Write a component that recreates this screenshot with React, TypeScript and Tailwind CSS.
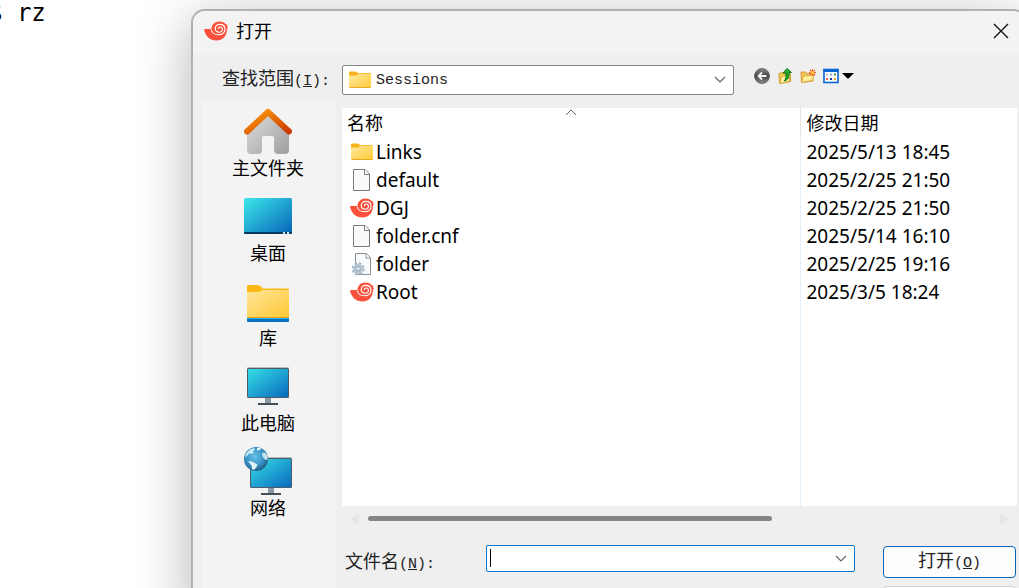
import { useState } from 'react'
import type { ReactNode } from 'react'

interface FileEntry {
  name: string
  kind: 'directory' | 'file' | 'session' | 'config'
  modified: string
}

interface Place {
  label: string
  icon: ReactNode
}

const files: FileEntry[] = [
  { name: 'Links', kind: 'directory', modified: '2025/5/13 18:45' },
  { name: 'default', kind: 'file', modified: '2025/2/25 21:50' },
  { name: 'DGJ', kind: 'session', modified: '2025/2/25 21:50' },
  { name: 'folder.cnf', kind: 'file', modified: '2025/5/14 16:10' },
  { name: 'folder', kind: 'config', modified: '2025/2/25 19:16' },
  { name: 'Root', kind: 'session', modified: '2025/3/5 18:24' },
]

const places: Place[] = [
  { label: '主文件夹', icon: <HomeIcon /> },
  { label: '桌面', icon: <DesktopIcon /> },
  { label: '库', icon: <LibraryIcon /> },
  { label: '此电脑', icon: <ComputerIcon /> },
  { label: '网络', icon: <NetworkIcon /> },
]

function ShellIcon() {
  return (
    <svg viewBox="0 0 24 20" className="h-5 w-6 shrink-0">
      <path
        d="M0 8H7.500C7.500 3.800 10.800 0.500 15.500 0.500C18.500 0.500 20.500 1.500 21.500 3L23.500 4L23 5.500L24 6.500L23 8C23 15 18.500 19.500 12.500 19.500C6 19.500 1 15 0 8Z"
        fill="#fb503b"
      />
      <path
        d="M7.200 8.500C8 12 10.800 13.800 14.500 13.800C18.800 13.800 21 11 21 8.200C21 5 18.500 3.400 15.800 3.400C12.800 3.400 11.200 5.500 11.200 7.600C11.200 9.900 13.200 11.200 15.200 11.200C17.300 11.200 18.400 9.700 18.400 8.300C18.400 6.800 17.300 6 16.200 6C15 6 14.200 6.900 14.400 8.100"
        fill="none"
        stroke="#fff"
        strokeWidth="1.100"
      />
    </svg>
  )
}

function FolderIcon() {
  return (
    <svg viewBox="0 0 22 18" className="h-[18px] w-[22px] shrink-0">
      <defs>
        <linearGradient id="folder" x1="0" y1="0" x2="1" y2="1">
          <stop offset="0" stopColor="#ffe8a0" />
          <stop offset="1" stopColor="#ffca36" />
        </linearGradient>
      </defs>
      <path d="M0 1.500Q0 0.500 1 0.500H7L9 2H21Q22 2 22 3V9H0Z" fill="#f9b31c" />
      <path d="M0 4.500H7.500L9.500 2.800H22V16Q22 17 21 17H1Q0 17 0 16Z" fill="url(#folder)" />
      <path d="M0.500 16.500H21.500" stroke="#e9a820" />
    </svg>
  )
}

function PageIcon() {
  return (
    <svg viewBox="0 0 18 22" className="h-[22px] w-[18px] shrink-0">
      <path d="M0.500 0.500H12L16.500 5V21.500H0.500Z" fill="#fafafa" stroke="#777" />
      <path d="M11.500 0.500V5.500H16" fill="#fff" stroke="#777" />
    </svg>
  )
}

function ConfigIcon() {
  return (
    <svg viewBox="0 0 20 23" className="h-[23px] w-5 shrink-0">
      <path d="M3.500 0.500H14.500L18.500 4.500V21.500H3.500Z" fill="#f8fafb" stroke="#8b9094" />
      <path d="M14 0.500V5H18.500" fill="#fff" stroke="#8b9094" />
      <circle cx="6.200" cy="15.800" r="5.600" fill="none" stroke="#a3b5c4" strokeWidth="2" strokeDasharray="2.400 2" />
      <circle cx="6.200" cy="15.800" r="3.600" fill="none" stroke="#b5c6d4" strokeWidth="3" />
      <circle cx="6.200" cy="15.800" r="2" fill="#e9eef2" stroke="#7e93a5" strokeWidth="0.800" />
    </svg>
  )
}

function HomeIcon() {
  return (
    <svg viewBox="0 -1 48 48" className="size-12">
      <defs>
        <linearGradient id="wall" x1="0" y1="0" x2="1" y2="1">
          <stop offset="0" stopColor="#e0e0e0" />
          <stop offset="1" stopColor="#9e9e9e" />
        </linearGradient>
        <linearGradient id="roof" x1="0" y1="0" x2="1" y2="1">
          <stop offset="0" stopColor="#ff9d0a" />
          <stop offset="1" stopColor="#cc3a00" />
        </linearGradient>
      </defs>
      <path
        d="M3 22L24 3L45 22V42Q45 46 41 46H34Q30 46 30 42V30Q30 28 28 28H20Q18 28 18 30V42Q18 46 14 46H7Q3 46 3 42Z"
        fill="url(#wall)"
      />
      <path d="M3 23.500L24 4L45 23.500" fill="none" stroke="url(#roof)" strokeWidth="6" strokeLinecap="round" strokeLinejoin="round" />
    </svg>
  )
}

function DesktopIcon() {
  return (
    <svg viewBox="0 0 48 48" className="size-12">
      <defs>
        <linearGradient id="screen" x1="0" y1="0" x2="1" y2="1">
          <stop offset="0" stopColor="#3ce8ea" />
          <stop offset="1" stopColor="#0663b8" />
        </linearGradient>
      </defs>
      <rect y="6" width="48" height="36" rx="1.500" fill="url(#screen)" />
      <path d="M0 40H48V40.500Q48 42 46.500 42H1.500Q0 42 0 40.500Z" fill="#073a63" />
      <path d="M39 41H41M43 41H45" stroke="#dcecf5" strokeWidth="2" />
    </svg>
  )
}

function LibraryIcon() {
  return (
    <svg viewBox="0 -2 48 48" className="size-12">
      <defs>
        <linearGradient id="library" x1="0" y1="0" x2="1" y2="1">
          <stop offset="0" stopColor="#ffe59b" />
          <stop offset="1" stopColor="#ffc832" />
        </linearGradient>
      </defs>
      <path d="M3 7Q3 6 4.500 6H14Q16 6 19 9.500H44Q45 10 45 11V18H3Z" fill="#fbb917" />
      <path d="M3 13H14Q16 13 18.500 11H45V38Q45 39 44 39H4Q3 39 3 38Z" fill="url(#library)" />
      <path d="M3 38.500H45" stroke="#e1a322" />
      <path d="M3 39.500H45" stroke="#27b4e5" />
      <path d="M3 40H45V42Q45 43 44 43H4Q3 43 3 42Z" fill="#0870c2" />
    </svg>
  )
}

function Monitor() {
  return (
    <>
      <defs>
        <linearGradient id="monitor" x1="0" y1="0" x2="1" y2="1">
          <stop offset="0" stopColor="#36e1e7" />
          <stop offset="1" stopColor="#0867bd" />
        </linearGradient>
      </defs>
      <rect x="21" y="31" width="6" height="6" fill="#8b98a3" />
      <rect x="14" y="36" width="20" height="2" fill="#454f58" />
      <rect x="3.500" y="1.500" width="41" height="29" rx="0.500" fill="url(#monitor)" stroke="#4d5c66" />
      <path d="M3.500 0.500H44.500" stroke="#b4bdc5" />
    </>
  )
}

function ComputerIcon() {
  return (
    <svg viewBox="0 -5 48 48" className="size-12">
      <Monitor />
    </svg>
  )
}

function NetworkIcon() {
  return (
    <svg viewBox="0 0 48 48" className="size-12">
      <defs>
        <radialGradient id="globe" cx="0.450" cy="0.400" r="0.600">
          <stop offset="0" stopColor="#66c1e9" />
          <stop offset="0.650" stopColor="#3a91c3" />
          <stop offset="1" stopColor="#235d83" />
        </radialGradient>
      </defs>
      <g transform="translate(3 10)">
        <Monitor />
      </g>
      <circle cx="12" cy="12" r="12" fill="url(#globe)" />
      <path d="M2.500 6L6 2.500L10 1L11 2.500L9 4L10 5.500L7 7L5 6.500L3 9L1 10Z" fill="#cceaf3" />
      <path d="M13 1H17L16 3L13 3.500Z" fill="#e6f4f8" />
      <path d="M4 14L8 14.500L13.500 17.500L12.500 20L10 23L8 22L7.500 18.500Z" fill="#dff2f7" />
      <path d="M18 6L21 5.500L23.500 9L23.500 13L21 12.500L18.500 9.500Z" fill="#c5e5ee" />
    </svg>
  )
}

function BackIcon() {
  return (
    <svg viewBox="0 0 16 16" className="size-4">
      <defs>
        <linearGradient id="back" x1="0" y1="0" x2="0" y2="1">
          <stop offset="0" stopColor="#8a8a8a" />
          <stop offset="0.500" stopColor="#414141" />
          <stop offset="1" stopColor="#8d8d8d" />
        </linearGradient>
      </defs>
      <circle cx="8" cy="8" r="7.500" fill="url(#back)" stroke="#6b6b6b" />
      <path d="M12.500 8H4.500M8 4.500L4.500 8L8 11.500" fill="none" stroke="#f5f5f5" strokeWidth="1.800" />
    </svg>
  )
}

function UpIcon() {
  return (
    <svg viewBox="0 0 16 16" className="size-4">
      <path d="M2 5.500L6 4.500L7 6H13.500V13.500L2.500 15.500Z" fill="#f3cc55" stroke="#c99a2a" />
      <path d="M4.500 8.500L13.500 6.500L12 13.500L2.500 15.500Z" fill="#fff0a3" stroke="#d9aa36" />
      <path d="M7 13C9 11.500 9.300 8.500 8.800 5H6L10 0.500L14.500 4.500H12C12.500 8.500 11.500 12 7 13Z" fill="#26aa2d" stroke="#0d7315" />
    </svg>
  )
}

function NewFolderIcon() {
  return (
    <svg viewBox="0 0 16 16" className="size-4">
      <path d="M1 4H5.500L6.500 5.500H13V13L1.500 14.500Z" fill="#f2c85a" stroke="#d29a35" />
      <path d="M3.500 8L14 7L12.500 12.500L1.500 14.500Z" fill="#fff09c" stroke="#dba93d" />
      <path d="M12.500 1V8M9 4.500H16M10 2L15 7M15 2L10 7" stroke="#f06432" strokeWidth="1.200" />
      <circle cx="12.500" cy="4.500" r="1.500" fill="#ffda3a" />
    </svg>
  )
}

function ViewIcon() {
  return (
    <svg viewBox="0 0 16 16" className="size-4">
      <rect x="1" y="1.500" width="14" height="13" fill="#fff" stroke="#0867d2" strokeWidth="1.600" />
      <path d="M0.500 2.500H15.500" stroke="#0867d2" strokeWidth="3" />
      <path d="M3 6.500H5" stroke="#c9b6d0" strokeWidth="2" />
      <path d="M3 11H5" stroke="#ef6a48" strokeWidth="2" />
      <path d="M7 6.500H9" stroke="#7ba5dd" strokeWidth="2" />
      <path d="M7 11H9" stroke="#123c9c" strokeWidth="2" />
      <path d="M11 6.500H13" stroke="#36a047" strokeWidth="2" />
      <path d="M11 11H13" stroke="#d9a528" strokeWidth="2" />
    </svg>
  )
}

function Chevron() {
  return (
    <svg viewBox="0 0 12 7" className="h-[7px] w-3">
      <path d="M1 1L6 6L11 1" fill="none" stroke="#666" strokeWidth="1.200" />
    </svg>
  )
}

function FileIcon({ kind }: { kind: FileEntry['kind'] }) {
  if (kind === 'directory') return <FolderIcon />
  if (kind === 'session') return <ShellIcon />
  if (kind === 'config') return <ConfigIcon />
  return <PageIcon />
}

function Sidebar() {
  return (
    <nav className="flex w-[133px] shrink-0 flex-col gap-[11px] bg-[#f3f3f3] pt-[6px] pr-px">
      {places.map((p) => (
        <button key={p.label} type="button" className="flex flex-col items-center gap-px">
          {p.icon}
          <span className="h-[25px] text-[18px] leading-[25px]">{p.label}</span>
        </button>
      ))}
    </nav>
  )
}

function FileTable() {
  return (
    <table className="h-[398px] w-full table-fixed border-collapse bg-white text-left">
      <colgroup>
        <col className="w-[458px]" />
        <col />
      </colgroup>
      <thead>
        <tr className="h-[30px] text-[18px] leading-[30px]">
          <th className="relative border-r border-[#e5e5e5] p-0 pl-[5px] font-normal">
            名称
            <svg viewBox="0 0 12 7" className="absolute top-px left-1/2 h-[7px] w-3 -translate-x-1/2">
              <path d="M1 6L6 1L11 6" fill="none" stroke="#666" />
            </svg>
          </th>
          <th className="p-0 pl-[6px] font-normal">修改日期</th>
        </tr>
      </thead>
      <tbody className="text-[19px] leading-7">
        {files.map((f) => (
          <tr key={f.name} className="h-7">
            <td className="border-r border-[#e3effb] p-0 pl-2">
              <div className="flex items-center gap-[2px]">
                <span className="flex w-6 justify-center">
                  <FileIcon kind={f.kind} />
                </span>
                {f.name}
              </div>
            </td>
            <td className="p-0 pl-[6px]">{f.modified}</td>
          </tr>
        ))}
        <tr>
          <td className="border-r border-[#e3effb] p-0"></td>
          <td className="p-0"></td>
        </tr>
      </tbody>
    </table>
  )
}

export default function App() {
  const [folder, setFolder] = useState('Sessions')
  const [fileName, setFileName] = useState('')

  return (
    <div className="flex h-screen items-start overflow-hidden bg-white font-['Noto_Sans','Noto_Sans_CJK_SC',sans-serif] text-black">
      <pre className="-ml-3 w-[203px] shrink-0 font-['DejaVu_Sans_Mono',monospace] text-[24px] leading-[26px]">$ rz</pre>

      <div
        role="dialog"
        aria-label="打开"
        className="mt-[9px] -mr-2 min-h-screen min-w-0 flex-1 overflow-hidden rounded-[14px] border-2 border-[#b0b0b0] bg-[#efefef] shadow-[0_12px_56px_rgba(0,0,0,0.3)]"
      >
        <header className="flex h-[43px] items-center gap-2 bg-[#f3f3f3] pr-4 pb-1 pl-[11px]">
          <ShellIcon />
          <h1 className="flex-1 text-[18px] leading-6">打开</h1>
          <button type="button" aria-label="关闭">
            <svg viewBox="0 0 16 16" className="size-4">
              <path d="M1 1L15 15M15 1L1 15" stroke="#111" strokeWidth="1.400" />
            </svg>
          </button>
        </header>

        <div className="flex h-[47px] items-center pt-1 pl-[29px] font-['Liberation_Mono','Noto_Sans_CJK_SC',monospace] text-[15px] text-[#222]">
          <label htmlFor="look-in" className="w-[120px] shrink-0 pt-[2px]">
            <span className="text-[18px]">查找范围</span>(<u>I</u>):
          </label>
          <div className="relative h-[30px] w-[392px]">
            <select
              id="look-in"
              value={folder}
              onChange={(e) => setFolder(e.target.value)}
              className="h-full w-full appearance-none rounded-[2px] border border-[#868686] bg-white pt-1 pl-[33px]"
            >
              <option>Sessions</option>
            </select>
            <span className="pointer-events-none absolute inset-y-0 left-[7px] flex items-center">
              <FolderIcon />
            </span>
            <span className="pointer-events-none absolute inset-y-0 right-2 flex items-center">
              <Chevron />
            </span>
          </div>
          <div className="flex items-center gap-[7px] pb-2 pl-5">
            <button type="button" aria-label="后退"><BackIcon /></button>
            <button type="button" aria-label="向上一级"><UpIcon /></button>
            <button type="button" aria-label="新建文件夹"><NewFolderIcon /></button>
            <button type="button" aria-label="查看" className="flex items-center gap-[3px]">
              <ViewIcon />
              <svg viewBox="0 0 12 6" className="h-[6px] w-3">
                <path d="M0 0H12L6 6Z" fill="#000" />
              </svg>
            </button>
          </div>
        </div>

        <div className="flex pr-2 pl-[9px]">
          <Sidebar />
          <main className="min-w-0 flex-1 pt-[7px] pl-[7px]">
            <FileTable />
            <div className="flex h-[25px] items-center justify-between px-2">
              <svg viewBox="0 0 9 12" className="h-3 w-[9px]">
                <path d="M9 0V12L0 6Z" fill="#e6e6e6" />
              </svg>
              <div className="ml-[9px] h-[5px] w-[404px] rounded-full bg-[#858585]"></div>
              <div className="flex-1"></div>
              <svg viewBox="0 0 9 12" className="h-3 w-[9px]">
                <path d="M0 0V12L9 6Z" fill="#e6e6e6" />
              </svg>
            </div>

            <div className="mt-[14px] flex items-start font-['Liberation_Mono','Noto_Sans_CJK_SC',monospace] text-[15px] text-[#222]">
              <label htmlFor="file-name" className="w-36 shrink-0 pl-[3px] leading-9">
                <span className="text-[18px]">文件名</span>(<u>N</u>):
              </label>
              <div className="relative h-[27px] w-[369px]">
                <input
                  id="file-name"
                  value={fileName}
                  onChange={(e) => setFileName(e.target.value)}
                  className="h-full w-full rounded-[2px] border border-[#0078d4] bg-white px-1 caret-transparent outline-none"
                />
                <span className="pointer-events-none absolute top-1 left-1 h-[18px] w-px bg-black"></span>
                <button type="button" aria-label="文件名列表" className="absolute inset-y-0 right-2 flex items-center">
                  <Chevron />
                </button>
              </div>
              <div className="ml-7 flex flex-1 flex-col gap-2 pt-px pr-px">
                <button type="submit" className="h-8 rounded-[4px] border border-[#0067c0] bg-[#fdfdfd]">
                  <span className="text-[18px]">打开</span>(<u>O</u>)
                </button>
                <button type="button" aria-label="取消" className="h-8 rounded-[4px] border border-[#d0d0d0] bg-[#fdfdfd]"></button>
              </div>
            </div>
          </main>
        </div>
      </div>
    </div>
  )
}
